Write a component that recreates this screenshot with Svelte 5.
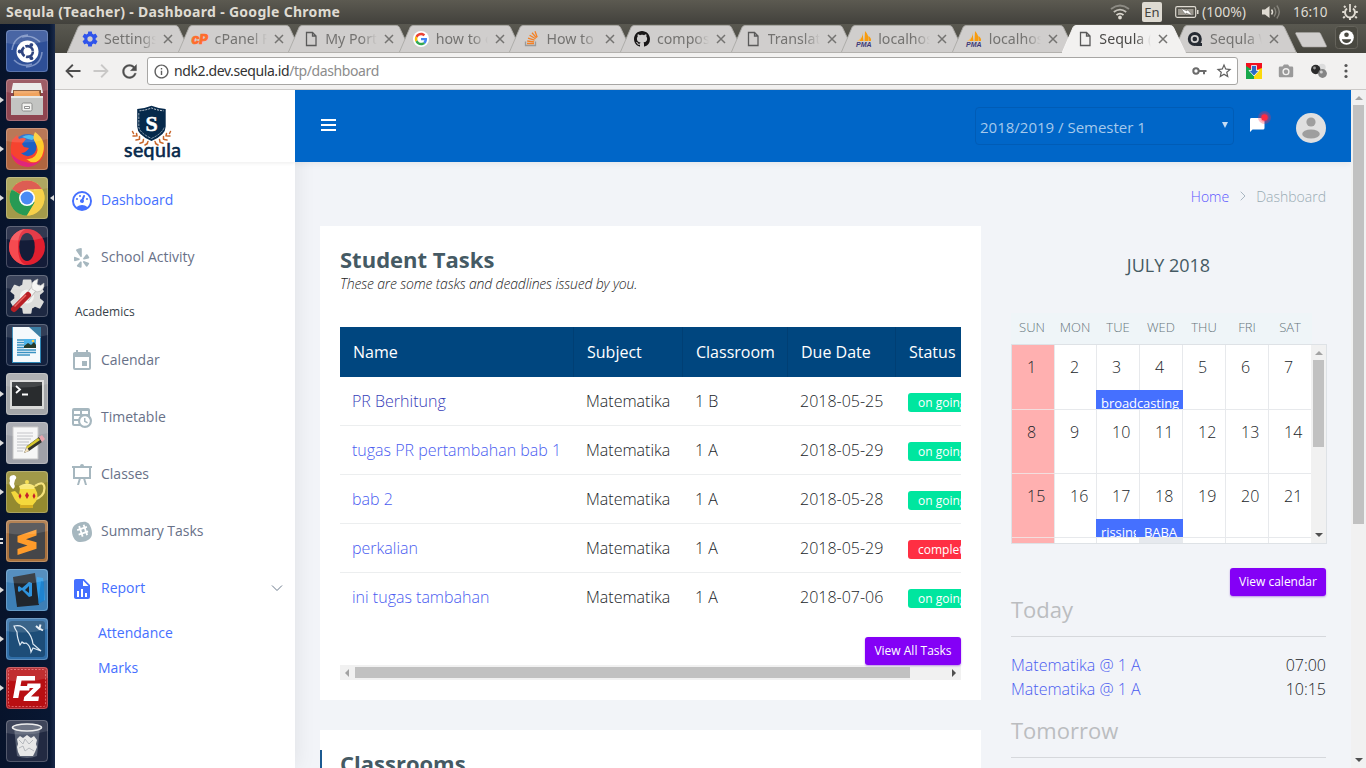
<script>
  const gear = 'M19.43 12.98c.04-.32.07-.64.07-.98s-.03-.66-.07-.98l2.11-1.65c.19-.15.24-.42.12-.64l-2-3.46c-.12-.22-.39-.3-.61-.22l-2.49 1c-.52-.4-1.08-.73-1.69-.98l-.38-2.65C14.46 2.18 14.25 2 14 2h-4c-.25 0-.46.18-.49.42l-.38 2.65c-.61.25-1.17.59-1.69.98l-2.49-1c-.23-.09-.49 0-.61.22l-2 3.46c-.13.22-.07.49.12.64l2.11 1.65c-.04.32-.07.65-.07.98s.03.66.07.98l-2.11 1.65c-.19.15-.24.42-.12.64l2 3.46c.12.22.39.3.61.22l2.49-1c.52.4 1.08.73 1.69.98l.38 2.65c.03.24.24.42.49.42h4c.25 0 .46-.18.49-.42l.38-2.65c.61-.25 1.17-.59 1.69-.98l2.49 1c.23.09.49 0 .61-.22l2-3.46c.12-.22.07-.49-.12-.64l-2.11-1.65zM12 15.5c-1.93 0-3.5-1.57-3.5-3.5s1.57-3.5 3.5-3.5 3.5 1.57 3.5 3.5-1.57 3.5-3.5 3.5z';

  const fav = {
    gear: `<path transform="translate(-1.1 -1.1) scale(.76)" fill="#2f54eb" d="${gear}"/>`,
    cpanel: `<text x="-.5" y="12.5" font-family="Inter" font-weight="800" font-style="italic" font-size="13.5" textLength="16.5" lengthAdjust="spacingAndGlyphs" fill="#ff6c2c" stroke="#ff6c2c" stroke-width=".7">cP</text>`,
    page: `<path d="M3.500 1.500h6l3.500 3.500v9.500h-9.500zM9.500 1.500v3.500h3.500" fill="none" stroke="#5a5a5a" stroke-width="1.300"/>`,
    google: `<circle cx="8" cy="8" r="8" fill="#fff"/><g transform="translate(1.800 1.800) scale(.26)"><path fill="#EA4335" d="M24 9.500c3.540 0 6.710 1.220 9.210 3.600l6.850-6.850C35.900 2.380 30.470 0 24 0 14.620 0 6.510 5.380 2.560 13.220l7.980 6.190C12.430 13.720 17.740 9.500 24 9.500z"/><path fill="#4285F4" d="M46.980 24.550c0-1.570-.15-3.090-.38-4.550H24v9.020h12.940c-.58 2.960-2.260 5.480-4.780 7.180l7.730 6c4.510-4.180 7.090-10.360 7.090-17.650z"/><path fill="#FBBC05" d="M10.530 28.590c-.48-1.450-.76-2.990-.76-4.590s.27-3.140.76-4.590l-7.980-6.190C.92 16.460 0 20.120 0 24s.92 7.540 2.560 10.780l7.970-6.190z"/><path fill="#34A853" d="M24 48c6.480 0 11.930-2.130 15.890-5.810l-7.730-6c-2.150 1.450-4.920 2.300-8.160 2.300-6.260 0-11.570-4.220-13.470-9.910l-7.980 6.190C6.510 42.620 14.620 48 24 48z"/></g>`,
    stack: `<path d="M1.500 10.500v4h10v-4" fill="none" stroke="#9a9a9a" stroke-width="1.300"/><path d="M3 12.500h7M3.200 10l6.900.8M4 7.200l6.600 2M5.600 4.200l6 3.600M8 1.700l4.500 5.200M11 .3l2.200 6" stroke="#f48024" stroke-width="1.300" fill="none"/>`,
    github: `<path fill="#191717" d="M8 0C3.580 0 0 3.580 0 8c0 3.540 2.290 6.530 5.470 7.590.4.070.55-.17.55-.38 0-.19-.01-.82-.01-1.490-2.010.37-2.530-.49-2.690-.94-.09-.23-.48-.94-.82-1.130-.28-.15-.68-.52-.01-.53.63-.01 1.080.58 1.230.82.72 1.210 1.870.87 2.330.66.070-.52.28-.87.51-1.070-1.780-.2-3.640-.89-3.640-3.950 0-.87.31-1.590.82-2.150-.08-.2-.36-1.020.080-2.120 0 0 .67-.21 2.200.82.64-.18 1.320-.27 2-.27.68 0 1.360.090 2 .27 1.530-1.040 2.200-.82 2.200-.82.44 1.100.16 1.920.080 2.120.51.56.82 1.270.82 2.150 0 3.070-1.870 3.750-3.650 3.950.29.25.54.73.54 1.480 0 1.070-.01 1.930-.01 2.200 0 .21.15.46.55.38A8.013 8.013 0 0 0 16 8c0-4.420-3.580-8-8-8z"/>`,
    pma: `<path d="M6.500 1.500Q7 6 3 10h4.500zM9 0Q13 4 12.500 10H8.500zM12.500 5q3 2 2.500 5h-2z" fill="#f89c0e"/><path d="M5 5q-1 4-4 5h3z" fill="#fbbf63"/><text x="0" y="15.700" font-family="Liberation Sans" font-weight="700" font-style="italic" font-size="6.800" textLength="15.500" lengthAdjust="spacingAndGlyphs" fill="#3f3a78">PMA</text>`,
    eye: `<circle cx="7.800" cy="8" r="7" fill="#262b33"/><circle cx="7.800" cy="8" r="3.200" fill="none" stroke="#d0cfce" stroke-width="1.800"/><path d="M10 12h5v3H9z" fill="#262b33"/><circle cx="7.800" cy="8" r="1.300" fill="#262b33"/>`,
  };

  const tabs = [
    { t: 'Settings', i: fav.gear }, { t: 'cPanel Fi', i: fav.cpanel }, { t: 'My Portal', i: fav.page },
    { t: 'how to cr', i: fav.google }, { t: 'How to o', i: fav.stack }, { t: 'compose', i: fav.github },
    { t: 'Translati', i: fav.page }, { t: 'localhost', i: fav.pma }, { t: 'localhost', i: fav.pma },
    { t: 'Sequla (T', i: fav.page, on: true }, { t: 'Sequla W', i: fav.eye },
  ];

  const dock = [
    { c: '#2e4f97', s: '<g fill="none" stroke="#b9c8ea" stroke-width="1.600" opacity=".55"><path d="M6 20Q8 6 22 5M36 22Q35 36 20 37M8 30Q16 38 26 34M34 12Q26 4 16 7"/></g><circle cx="21.500" cy="21.500" r="11" fill="#fff"/><circle cx="21.500" cy="21.500" r="5.400" fill="none" stroke="#2e4480" stroke-width="2.600" stroke-dasharray="9.800 1.500"/><g fill="#2e4480"><circle cx="13.700" cy="21.500" r="1.900"/><circle cx="25.400" cy="14.800" r="1.900"/><circle cx="25.400" cy="28.200" r="1.900"/></g>' },
    { c: '#8f4550', n: 1, s: '<path d="M7 4h28l2 10H5z" fill="#e9e9e7"/><path d="M7 11h28v6H7z" fill="#7a4a2a"/><path d="M8 12h25l1 5H8z" fill="#f0a35e"/><path d="M5 17h32v19H5z" fill="#c3c4c2"/><path d="M5 17h32v2H5z" fill="#e8e8e6"/><rect x="16" y="24" width="10" height="8" rx="1.500" fill="#f2f2f0" stroke="#8c8c8a"/><path d="M18.500 27.500h5v2h-5z" fill="#fff" stroke="#777" stroke-width=".8"/>' },
    { c: '#b0653f', n: 1, s: '<circle cx="21.500" cy="20" r="14" fill="#1e5fc4"/><path d="M16 9q7-4 14 0l-4 3-4-1z" fill="#35b5ee"/><path d="M6 12l5-5 2 4q4-2 7 0l-4 5 2 3 5 1q-3 5-8 5 5 5 11 2 6-4 4-11l-1-4q4-1 8 3 4 10-2 17-7 7-15 6.500Q8 38 5 26q-1-7 1-14z" fill="#f6432f"/><path d="M29 4q-3 6 0 10 5 8 0 14-4 4-9 3 10 8 16-3Q42 13 29 4z" fill="#ffcb2b"/><path d="M5 25q3 13 17 14 8-1 12-6-7 4-14 1Q10 32 5 25z" fill="#e0267a"/>' },
    { c: '#a39a4a', n: 1, f: 1, s: '<circle cx="21" cy="21" r="17.500" fill="#f2c83c"/><path d="M21 21 5.800 12.300A17.500 17.500 0 0 1 36.200 12.300H21z" fill="#d8463a"/><path d="M5.800 12.300A17.500 17.500 0 0 0 21 38.500l8-13-8-4z" fill="#279a54"/><path d="M5.800 12.300 13.400 25.400 21 29 13 18z" fill="#279a54"/><path d="M36.200 12.300A17.500 17.500 0 0 1 21 38.500l7.600-13-.8-13.200z" fill="#f7d149"/><circle cx="21" cy="21" r="8" fill="#fff"/><circle cx="21" cy="21" r="6.400" fill="#4a8af4"/>' },
    { c: '#141c38', s: '<ellipse cx="21" cy="21" rx="18" ry="18" fill="#e01f2f"/><path d="M21 3a18 18 0 0 0 0 36q-9-1-9-18t9-18z" fill="#f64a50"/><ellipse cx="21" cy="21" rx="7.800" ry="14" fill="#141c38"/>' },
    { c: '#1d2842', s: `<path transform="translate(.5 1) scale(1.720)" fill="#dcdcda" d="${gear}"/><circle cx="21" cy="21.500" r="7" fill="#f3f3f1"/><path d="M20 24L30 11" stroke="#b9b9b7" stroke-width="6.500"/><path d="M20 24L30 11" stroke="#f4f4f2" stroke-width="5"/><path d="M26 14q-2-8 6-10l-1 5 3 2 4-3q1 8-7 9z" fill="#f4f4f2" stroke="#b0b0ae" stroke-width=".6"/><path d="M8 34L22 20" stroke="#b81f25" stroke-width="6" stroke-linecap="round"/><path d="M8.500 31.500L20 20" stroke="#ec6a64" stroke-width="1.500"/>` },
    { c: '#14223f', s: '<path d="M6 3h20l9 9v27H6z" fill="#f4f9fc"/><path d="M23 3h12v11z" fill="#1f6c98"/><path d="M6 3h1v36H6zM35 14v25H6v-1h28V14z" fill="#2d86b5"/><path d="M11 16h7M11 18.500h7M11 21h7M11 23.500h7M11 26h19M11 28.500h19M11 31h13" stroke="#3a92c2" stroke-width="1.400"/><path d="M18 15h12v9H18z" fill="#4eb4ea"/><path d="M18 22l4-3 3 2 3-3 2 3v3H18z" fill="#263b2a"/><circle cx="27" cy="17" r="1.300" fill="#f9d048"/>' },
    { c: '#a4a6a8', n: 1, s: '<path d="M4 7h34v29H4z" fill="#d9dad8"/><path d="M6 9h30v24H6z" fill="#292c2e"/><path d="M10 13l4 3.500-4 3.500M16 21.500h6" fill="none" stroke="#fff" stroke-width="1.800"/>' },
    { c: '#9fa1a8', n: 1, s: '<path d="M7 5h25v32H7z" fill="#f6f6f6" stroke="#c4c4c4"/><path d="M11 11h16M11 14h16M11 17h14M11 20h12M11 23h12M11 26h9M11 29h6" stroke="#b5b8bc" stroke-width=".9"/><path d="M18 31l3-7 12-9 3 5-13 9z" fill="#33342c"/><path d="M20 25L32 16l2 2-13 9z" fill="#d8c92f"/><path d="M33 15l3-2 3 4-3 3z" fill="#e9a3ac"/><path d="M18 31l3-6 2 4z" fill="#f2dfbb"/>' },
    { c: '#948a2f', n: 1, s: '<path d="M29 15q9-6 9.500 2 0 9-11 12" fill="none" stroke="#f5e27a" stroke-width="2.200"/><path d="M14 17h15q6 10-2 17H15q-5-2-8-9l-2-4 4-1 4 4z" fill="#f4d93c"/><path d="M13 15q8-5 16 0l-1 3H14z" fill="#f9e878"/><circle cx="21" cy="11" r="2" fill="#f4d93c"/><path d="M14 34h13v3H14z" fill="#d5ae21"/><path d="M14 22l1.500 3-1.500 3-1.500-3zM21 21l2 3.500-2 3.500-2-3.500zM28 22l1.500 3-1.500 3-1.500-3z" fill="#c5202c"/><path d="M7 18Q2 13 4 10q-2-6 4-6 4 2 1 5l-1 4q2 3-1 5z" fill="#fff"/>' },
    { c: '#a8703c', n: 2, s: '<rect x="3" y="3" width="36" height="36" rx="2" fill="#454649"/><path d="M11.500 16L30.500 9.500v6L20 19.300l10.500 3v6.500L11.500 35v-6l10-3.500-10-3.200z" fill="#ff9b2a"/>' },
    { c: '#3d7fb6', n: 1, s: '<path d="M31 8l6 1 2 22-8 4z" fill="#2d9ae6"/><path d="M7 8l22-4 4 32-22 2z" fill="#20262d"/><path d="M35 12l3 1v19l-6 3z" fill="#1675c0" opacity=".6"/><path d="M23 13l3 1v13l-3 1-7-7-3 2-1-1v-4l1-1 3 2zM23 17l-4 4 4 3z" fill="#2f93dc" fill-rule="evenodd"/>' },
    { c: '#2f6ea8', n: 1, s: '<rect x="3" y="3" width="36" height="36" rx="3" fill="#1d4d78"/><path d="M8 8q8-2 13 5 5 5 6 13l8 7-8-3q-1 2-2 4-1-7-5-9-2 1-4-1l-2 3q-3-8-3-13-2-3-3-6z" fill="none" stroke="#dfeaf4" stroke-width="1.200"/><path d="M30 8l4 3.500M34.500 6.500l-1 4 3.500 2" stroke="#e6eef5" stroke-width="2" fill="none"/>' },
    { c: '#ad1a20', n: 1, s: '<rect x="2.500" y="2.500" width="37" height="37" rx="2" fill="#b80f12" stroke="#df6063" stroke-dasharray="2 1.500"/><path d="M11 9h18v4.500H15.500L14.500 19H24l-.8 4.500h-9.500L12.300 31H7z" fill="#fff"/><path d="M21.500 16.500H34.500v3.800L25 29.500h8L32.300 34H17.500l.7-4 9.300-9h-6.800z" fill="#fff"/>' },
    { c: '#222a42', gap: 1, s: '<path d="M8 7l3 29q10 4 20 0l3-29z" fill="#737b8a" opacity=".65"/><path d="M11 19l3-3 3 2 4-3 4 3 3-2 3 4-1 4 1 3-2 5-2 4H14l-2-4-1-5 1-3z" fill="#e8e8e8"/><path d="M13 20l4 4 2-5 4 5 4-4M13 28l4-2 2 5 4-3 5 3" fill="none" stroke="#b5b8bd"/><ellipse cx="21" cy="7.500" rx="14.500" ry="3.500" fill="#596072" stroke="#ececec" stroke-width="1.600"/>' },
  ];

  const nav = {
    gauge: 'M12,2A10,10 0 0,0 2,12A10,10 0 0,0 12,22A10,10 0 0,0 22,12A10,10 0 0,0 12,2M12,4A8,8 0 0,1 20,12C20,14.4 19,16.5 17.3,18C15.9,16.7 14,16 12,16C10,16 8.2,16.7 6.7,18C5,16.5 4,14.4 4,12A8,8 0 0,1 12,4M14,5.89C13.62,5.9 13.26,6.15 13.1,6.54L11.81,9.77L11.71,10C11,10.13 10.41,10.6 10.14,11.26C9.73,12.29 10.23,13.45 11.26,13.86C12.29,14.27 13.45,13.77 13.86,12.74C14.12,12.08 14,11.32 13.57,10.76L13.67,10.5L14.96,7.29L14.97,7.26C15.17,6.75 14.92,6.17 14.41,5.96C14.28,5.91 14.15,5.89 14,5.89M10,6A1,1 0 0,0 9,7A1,1 0 0,0 10,8A1,1 0 0,0 11,7A1,1 0 0,0 10,6M7,9A1,1 0 0,0 6,10A1,1 0 0,0 7,11A1,1 0 0,0 8,10A1,1 0 0,0 7,9M17,9A1,1 0 0,0 16,10A1,1 0 0,0 17,11A1,1 0 0,0 18,10A1,1 0 0,0 17,9Z',
    yelp: 'M6.3,3.600Q8.500,2 11,2Q11.800,2 11.800,3L11.800,10.200Q11.500,11.600 10.400,10.700L6.200,4.700Q5.900,4 6.300,3.600ZM4.600,10.800L9.300,12.600Q10.200,13.300 9.300,14L4.900,15.200Q4,15.200 4,14.300V11.500Q4.100,10.700 4.600,10.800ZM7,19.200L10.300,15.600Q11.500,15 11.700,16.200L11.600,21Q11.400,22 10.400,21.800L7.500,20.700Q6.600,20.200 7,19.200ZM13.900,15.100L18.500,16.700Q19.500,17.100 19,18L17.300,20.400Q16.500,21.100 15.900,20.300L13,16.300Q12.800,15.100 13.900,15.100ZM13.200,12.200L16.100,8.500Q16.800,7.900 17.500,8.600L19.200,11.200Q19.500,12 18.600,12.400L14,13.500Q12.800,13.500 13.200,12.200Z',
    calendar: 'M19,19H5V8H19M16,1V3H8V1H6V3H5C3.890,3 3,3.890 3,5V19A2,2 0 0,0 5,21H19A2,2 0 0,0 21,19V5C21,3.890 20.100,3 19,3H18V1M17,12H12V17H17V12Z',
    timetable: 'M14,12H15.5V14.82L17.94,16.23L17.19,17.53L14,15.69V12M4,2H18A2,2 0 0,1 20,4V10.1C21.24,11.36 22,13.09 22,15A7,7 0 0,1 15,22C13.09,22 11.36,21.24 10.1,20H4A2,2 0 0,1 2,18V4A2,2 0 0,1 4,2M4,15V18H8.67C8.24,17.09 8,16.07 8,15H4M4,8H10V5H4V8M18,8V5H12V8H18M4,13H8.29C8.63,11.85 9.26,10.82 10.1,10H4V13M15,10.15A4.85,4.85 0 0,0 10.15,15C10.15,17.68 12.32,19.85 15,19.85A4.85,4.85 0 0,0 19.85,15C19.85,12.32 17.68,10.15 15,10.15Z',
    classes: 'M2,3H10A2,2 0 0,1 12,1A2,2 0 0,1 14,3H22V5H21V16H15.25L17,22H15L13.25,16H10.75L9,22H7L8.75,16H3V5H2V3M5,5V14H19V5H5Z',
    slack: 'M10.300,2.300C16.500,.7 19.300,2.500 21.200,8.300C23.200,15.500 21.600,19 15.500,21.300C8.500,23.300 5,21.700 2.700,15.700C.8,9 2.700,4.800 10.300,2.300ZM8.300,6.400L9,8.500L6.900,9.200L7.500,10.900L9.600,10.200L10.500,13L8.400,13.700L8.900,15.400L11.100,14.700L11.800,16.900L13.500,16.300L12.800,14.200L15.600,13.300L16.300,15.400L18,14.800L17.300,12.700L18.400,12.300L17.800,10.600L16.700,11L15.800,8.200L17.200,7.700L16.600,6L15.200,6.500L14.500,4.400L12.800,5L13.500,7.100L10.700,8L10,5.800ZM11.300,9.700L14.100,8.800L15,11.600L12.200,12.500Z',
    report: 'M13,9H18.5L13,3.5V9M6,2H14L20,8V20A2,2 0 0,1 18,22H6C4.89,22 4,21.1 4,20V4C4,2.89 4.89,2 6,2M7,20H9V14H7V20M11,20H13V12H11V20M15,20H17V16H15V20Z',
  };

  const rows = [
    ['PR Berhitung', '1 B', '2018-05-25', 'on going', true],
    ['tugas PR pertambahan bab 1', '1 A', '2018-05-29', 'on going'],
    ['bab 2', '1 A', '2018-05-28', 'on going'],
    ['perkalian', '1 A', '2018-05-29', 'completed'],
    ['ini tugas tambahan', '1 A', '2018-07-06', 'on going'],
  ];
  const days = ['SUN', 'MON', 'TUE', 'WED', 'THU', 'FRI', 'SAT'];
  const weeks = [
    { d: [1, 2, 3, 4, 5, 6, 7], e: [['broadcasting', 3, 2]] },
    { d: [8, 9, 10, 11, 12, 13, 14], e: [] },
    { d: [15, 16, 17, 18, 19, 20, 21], e: [['rissing', 3, 1], ['BABA', 4, 1]] },
    { d: ['', '', '', '', '', '', ''], e: [], last: true },
  ];
</script>

{#snippet item(icon, label, on)}
  <a class="item" class:on href="#top">
    <svg viewBox="0 0 24 24" width="24" height="24"><path d={icon} fill="currentColor" fill-rule="evenodd" /></svg>
    <span>{label}</span>
    {#if label === 'Report'}
      <svg class="chev" viewBox="0 0 12 8" width="12" height="8"><path d="M1 1.500l5 5 5-5" fill="none" stroke="#6b7a8c" stroke-width="1" /></svg>
    {/if}
  </a>
{/snippet}

<div class="desktop">
  <header class="panel">
    <span class="wintitle">Sequla (Teacher) - Dashboard - Google Chrome</span>
    <div class="tray">
      <svg class="wifi" width="20" height="16" viewBox="0 0 20 16" fill="none" stroke-width="1.800"><path d="M1 5q9-7 18 0" stroke="#8d8b84" /><path d="M3.800 8q6.200-4.800 12.400 0" stroke="#c5c2ba" /><path d="M6.500 11q3.500-2.700 7 0" stroke="#dfdbd2" /><circle cx="10" cy="13.500" r="1" fill="#dfdbd2" stroke="#dfdbd2" /></svg>
      <span class="lang">En</span>
      <svg class="bat" width="24" height="12" viewBox="0 0 24 12"><rect x=".7" y=".7" width="20" height="10.600" rx="1.500" fill="none" stroke="#dfdbd2" stroke-width="1.200" /><path d="M3 3h15.500v6H3z" fill="#9b978e" /><path d="M22 4h1.500v4H22z" fill="#dfdbd2" /><path d="M6 2.500l6 2.500.5-1.500 5 6-6.500-2.500-.5 1.500z" fill="#fff" stroke="#4b4943" stroke-width=".4" /></svg>
      <span class="pct">(100%)</span>
      <svg class="vol" width="20" height="16" viewBox="0 0 20 16" fill="none"><path d="M1 5.500h3L8.500 2v12L4 10.500H1z" fill="#dfdbd2" /><path d="M10.500 5.500q2 2.500 0 5" stroke="#dfdbd2" stroke-width="1.500" /><path d="M13 3.500q3.500 4.500 0 9M15.800 1.500q5 6.500 0 13" stroke="#85837b" stroke-width="1.400" /></svg>
      <span class="clock">16:10</span>
      <svg width="18" height="18" viewBox="0 0 18 18" fill="none" stroke="#dfdbd2"><path d="M6 5.500a5 5 0 1 0 6 0" stroke-width="2" /><path d="M9 1v8" stroke-width="1.800" /><path d="M9 15v2M3.800 13.500l-1.600 1.600M14.200 13.500l1.600 1.600M3.500 9H1.200M14.500 9h2.300M4.500 4.500L3 3M13.500 4.500L15 3" stroke-width="2" /></svg>
    </div>
  </header>

  <div class="below">
    <aside class="dock">
      {#each dock as d}
        <div class="slot" class:gap={d.gap}>
          <span class="mark">{#if d.n === 1}<i class="tri"></i>{:else if d.n === 2}<i class="bar"></i><i class="bar"></i>{/if}</span>
          <svg class="tile" viewBox="0 0 42 42" width="42" height="42">
            <rect width="42" height="42" rx="3.500" fill={d.c} />
            <rect x=".5" y=".5" width="41" height="41" rx="3.500" fill="none" stroke="#fff" stroke-opacity=".22" />
            {@html d.s}
            <path d="M0 4q0-4 4-4h34q4 0 4 4v7Q21 17 0 13z" fill="#fff" opacity=".13" />
          </svg>
          <span class="mark end">{#if d.f}<i class="tri focus"></i>{/if}</span>
        </div>
      {/each}
    </aside>

    <div class="browser">
      <div class="tabstrip">
        {#each tabs as t}
          <div class="tab" class:active={t.on}>
            <svg class="shape" viewBox="0 0 124 28" width="124" height="28">
              <path d="M0 28L11 2.500Q12 .5 14 .5H108.500Q110.500 .5 111.500 2.500L123.500 28z" fill={t.on ? '#f2f1f0' : '#d0cecd'} />
              <path d="M0 28L11 2.500Q12 .5 14 .5H108.500Q110.500 .5 111.500 2.500L123.500 28" fill="none" stroke={t.on ? '#f8f7f6' : '#aaa9a6'} stroke-width=".9" />
              {#if !t.on}<path d="M0 27.500H124" stroke="#b3b1ae" />{/if}
            </svg>
            <svg class="fav" viewBox="0 0 16 16" width="16" height="16">{@html t.i}</svg>
            <span class="tt">{t.t}</span>
            <svg class="x" viewBox="0 0 10 10" width="10" height="10"><path d="M1 1l8 8M9 1l-8 8" stroke="#747371" stroke-width="1.500" /></svg>
          </div>
        {/each}
        <svg class="newtab" width="34" height="18" viewBox="0 0 34 18"><path d="M2 1.500h22.500q1.500 0 2 1L32.500 15q.3 1-.8 1H10q-1.500 0-2-1L1.500 2.500z" fill="#d0cecd" stroke="#a5a39f" stroke-width=".6" /></svg>
        <svg class="user" width="24" height="24" viewBox="0 0 24 24"><rect x=".5" y=".5" width="22" height="22" rx="3" fill="#494840" stroke="#65635b" /><circle cx="11.500" cy="11.500" r="7.300" fill="#fff" /><circle cx="11.500" cy="8.700" r="2.300" fill="#494840" /><path d="M6.800 13.300h9.400q-1.200 3.800-4.700 3.800t-4.700-3.800z" fill="#494840" /></svg>
      </div>

      <div class="toolbar">
        <svg width="20" height="20" viewBox="0 0 24 24" fill="#4d4d4d"><path d="M21 10.900H7l5.600-5.600L11 3.700 2.700 12l8.300 8.300 1.600-1.600L7 13.100h14z" /></svg>
        <svg width="20" height="20" viewBox="0 0 24 24" fill="#c9c8c7"><path d="M3 10.900h14l-5.600-5.600L13 3.700l8.300 8.300-8.300 8.300-1.600-1.600 5.600-5.600H3z" /></svg>
        <svg width="21" height="21" viewBox="0 0 24 24" fill="#4d4d4d"><path stroke="#4d4d4d" stroke-width=".4" d="M17.650 6.350C16.200 4.900 14.210 4 12 4c-4.420 0-7.990 3.580-7.990 8s3.570 8 7.990 8c3.730 0 6.840-2.550 7.730-6h-2.080c-.82 2.330-3.040 4-5.650 4-3.310 0-6-2.690-6-6s2.690-6 6-6c1.660 0 3.140.69 4.220 1.780L13 11h7V4l-2.350 2.350z" /></svg>
        <div class="omni">
          <svg width="17" height="17" viewBox="0 0 24 24" fill="#5f5f5f"><path d="M11 17h2v-6h-2v6zm1-15C6.480 2 2 6.480 2 12s4.480 10 10 10 10-4.480 10-10S17.520 2 12 2zm0 18c-4.410 0-8-3.590-8-8s3.590-8 8-8 8 3.590 8 8-3.590 8-8 8zM11 9h2V7h-2v2z" /></svg>
          <span class="url">ndk2.dev.sequla.id<em>/tp/dashboard</em></span>
          <svg width="15" height="8" viewBox="0 0 15 8"><circle cx="4" cy="4" r="2.700" fill="none" stroke="#6b6b6b" stroke-width="2" /><path d="M6.500 3H14.500v2H13v2.200h-2V5H6.500z" fill="#6b6b6b" /></svg>
          <svg width="18" height="18" viewBox="0 0 24 24" fill="#5f5f5f"><path d="M22 9.240l-7.190-.62L12 2 9.190 8.630 2 9.240l5.460 4.730L5.820 21 12 17.270 18.180 21l-1.630-7.030L22 9.240zM12 15.400l-3.760 2.270 1-4.280-3.320-2.880 4.380-.38L12 6.100l1.710 4.040 4.380.38-3.320 2.880 1 4.280L12 15.400z" /></svg>
        </div>
        <div class="ext">
          <svg width="16" height="16" viewBox="0 0 16 16"><path d="M0 0h8v16H0z" fill="#17a84b" /><path d="M8 0h8v16H8z" fill="#fbd90c" /><path d="M0 0h16v5L8 8 0 3z" fill="#f20f1f" /><path d="M5.500 2.500h5v5H13L8 13 3 7.500h2.500z" fill="#2a69c7" stroke="#fff" stroke-width=".8" /></svg>
          <svg width="16" height="14" viewBox="0 0 16 14"><path d="M2 2.500h2.500L6 .5h4l1.500 2H14q1.200 0 1.200 1.200V12q0 1.200-1.200 1.200H2Q.8 13.200.8 12V3.700Q.8 2.500 2 2.500z" fill="#9a9a9a" /><circle cx="8" cy="7.700" r="3.600" fill="#f2f1f0" /><circle cx="8" cy="7.700" r="2.200" fill="#9a9a9a" /></svg>
          <svg width="18" height="16" viewBox="0 0 18 16"><circle cx="12" cy="4.500" r="3.700" fill="#dcdcdc" /><circle cx="5.700" cy="6.500" r="4.700" fill="#2b2b2b" /><circle cx="4.500" cy="5" r="1.400" fill="#999" /><circle cx="12.500" cy="10.500" r="4.400" fill="#858585" /><circle cx="11.300" cy="9" r="1.500" fill="#d0d0d0" /></svg>
          <svg width="4" height="16" viewBox="0 0 4 16" fill="#555"><circle cx="2" cy="2.500" r="1.600" /><circle cx="2" cy="8" r="1.600" /><circle cx="2" cy="13.500" r="1.600" /></svg>
        </div>
      </div>

      <div class="page">
        <nav class="side">
          <div class="brand">
            <svg width="60" height="58" viewBox="0 0 60 58">
              <path d="M13.200 4Q21 3.500 27.500 .8 34 3.500 41.700 4V21.500q0 8.500-14.200 14.500-14.300-6-14.300-14.500z" fill="#06294b" />
              <path d="M15.500 5.800q6-.5 12-2.800 6 2.300 12 2.800" fill="none" stroke="#fff" stroke-width=".8" stroke-dasharray="2 1" />
              <path d="M14.800 8v14q1 6 12.700 11.500Q39 28 40.200 22" fill="none" stroke="#cfd8e0" stroke-width=".7" stroke-dasharray="2.500 1" />
              <text x="27.600" y="25.500" text-anchor="middle" font-family="Liberation Serif" font-weight="700" font-size="22" fill="#fff" stroke="#fff" stroke-width=".5">S</text>
              <g stroke="#c8662b" fill="none" stroke-width="1.500" stroke-linecap="round">
                <path d="M8.500 26.500l1 2M9 31h2.500M12.500 28.500l.5 2.500M12 35l2.800-.5M15.500 31.500v2.800M16 38.300l2.800-1M19.500 34.500l-.5 2.500M21 40l2.500-1.500M24 36.500l-.8 1.800" />
                <path d="M46.500 26.500l-1 2M46 31h-2.500M42.500 28.500l-.5 2.500M43 35l-2.800-.5M39.500 31.500v2.800M39 38.300l-2.800-1M35.500 34.500l.5 2.500M34 40l-2.500-1.500M31 36.500l.8 1.800" />
              </g>
              <text x="0" y="52" font-family="Lato" font-weight="400" font-size="19.500" textLength="57" lengthAdjust="spacing" fill="#06294b" stroke="#06294b" stroke-width=".6">sequla</text>
            </svg>
          </div>
          <div class="menu">
            {@render item(nav.gauge, 'Dashboard', true)}
            {@render item(nav.yelp, 'School Activity', false)}
            <div class="sect">Academics</div>
            {@render item(nav.calendar, 'Calendar', false)}
            {@render item(nav.timetable, 'Timetable', false)}
            {@render item(nav.classes, 'Classes', false)}
            {@render item(nav.slack, 'Summary Tasks', false)}
            {@render item(nav.report, 'Report', true)}
            <a class="sub" href="#top">Attendance</a>
            <a class="sub" href="#top">Marks</a>
          </div>
        </nav>

        <div class="content">
          <div class="top">
            <div class="burger"><i></i><i></i><i></i></div>
            <div class="sel"><span>2018/2019 / Semester 1</span><i></i></div>
            <svg class="chat" width="26" height="26" viewBox="0 0 26 26"><path d="M4.500 7h12.500q1.500 0 1.500 1.500v8.500q0 1.500-1.500 1.500H6.500L4 21V8.500Q4 7 5 7z" fill="#fff" /><circle cx="18.500" cy="6.500" r="6.500" fill="#fa2f4b" fill-opacity=".3" /><circle cx="18.500" cy="6.500" r="4.500" fill="#fa2f4b" fill-opacity=".25" /><circle cx="18.500" cy="6.500" r="3.200" fill="#ff2b40" /></svg>
            <svg width="30" height="30" viewBox="0 0 30 30"><circle cx="15" cy="15" r="15" fill="#e0e0e0" /><circle cx="15" cy="9" r="4.600" fill="#9e9e9e" /><ellipse cx="15" cy="21" rx="8.800" ry="4.600" fill="#9e9e9e" /></svg>
          </div>
          <div class="crumbs"><a href="#top">Home</a><svg width="6" height="10" viewBox="0 0 6 10"><path d="M.7.7L5 5 .7 9.300" fill="none" stroke="#a9b7c2" /></svg><span>Dashboard</span></div>
          <div class="cols">
            <div class="main">
              <section class="card tasks">
                <h2>Student Tasks</h2>
                <p>These are some tasks and deadlines issued by you.</p>
                <div class="scroller">
                  <div class="tr th"><span>Name</span><span>Subject</span><span>Classroom</span><span>Due Date</span><span>Status</span></div>
                  {#each rows as r}
                    <div class="tr"><span><a class:hov={r[4]} href="#top">{r[0]}</a></span><span>Matematika</span><span>{r[1]}</span><span>{r[2]}</span><span><b class:red={r[3] === 'completed'}>{r[3]}</b></span></div>
                  {/each}
                </div>
                <div class="act"><button>View All Tasks</button></div>
                <div class="hbar"><i class="al"></i><i class="hthumb"></i><i class="ar"></i></div>
              </section>
              <section class="card second"><h2>Classrooms</h2></section>
            </div>
            <div class="right">
              <div class="month">JULY 2018</div>
              <div class="dow">{#each days as d}<span>{d}</span>{/each}</div>
              <div class="cal">
                <div class="weeks">
                  {#each weeks as w}
                    <div class="week">
                      {#each w.d as n, i}<span class="day" class:sun={i === 0} class:today={w.last && i === 3}>{n}</span>{/each}
                      {#if w.e.length}
                        <div class="events">
                          {#each w.e as e}<span class="ev" style="grid-column: {e[1]} / span {e[2]}"><span>{e[0]}</span></span>{/each}
                        </div>
                      {/if}
                    </div>
                  {/each}
                </div>
                <div class="vbar"><i class="up"></i><i class="thumb"></i><i class="down"></i></div>
              </div>
              <div class="act"><button>View calendar</button></div>
              <h3>Today</h3>
              <div class="line"><a href="#top">Matematika @ 1 A</a><span>07:00</span></div>
              <div class="line"><a href="#top">Matematika @ 1 A</a><span>10:15</span></div>
              <h3 class="tm">Tomorrow</h3>
            </div>
          </div>
        </div>
        <div class="vbar pagebar"><i class="up"></i><i class="thumb"></i><i class="down"></i></div>
      </div>
    </div>
  </div>
</div>

<style>
  :global(body) { background: #f2f4f8; overflow: hidden; }
  * { box-sizing: border-box; }
  .desktop { width: 1366px; height: 768px; display: flex; flex-direction: column; overflow: hidden; font-family: "Open Sans", sans-serif; }
  a { text-decoration: none; color: #4a5cf0; }
  .panel { height: 24px; flex: none; background: linear-gradient(#5c5a51, #42413c); display: flex; align-items: center; padding: 0 7px 0 6px; color: #dfdbd2; }
  .wintitle { font: 700 14px/24px "Noto Sans", sans-serif; letter-spacing: .3px; white-space: nowrap; }
  .tray { margin-left: auto; display: flex; align-items: center; font: 400 14px/24px "Noto Sans", sans-serif; }
  .lang { width: 20px; height: 20px; background: #dfdbd2; color: #44423d; border-radius: 2px; font: 400 13px/20px "Noto Sans", sans-serif; text-align: center; margin: 0 13px 0 12px; }
  .pct { width: 48px; font-size: 14px; margin-left: 3px; }
  .vol { margin: 0 12px 0 11px; }
  .clock { width: 37px; margin-right: 11px; font-size: 13.500px; }
  .below { flex: 1; display: flex; min-height: 0; }
  .dock { width: 55px; flex: none; background: linear-gradient(90deg, #07132b, #081732 90%, #1a2a4a); padding-top: 6px; }
  .slot { height: 49px; display: flex; align-items: flex-start; }
  .slot.gap { margin-top: 4px; }
  .tile { flex: none; }
  .mark { width: 6px; height: 42px; display: flex; flex-direction: column; justify-content: center; gap: 2px; flex: none; }
  .tri { border: 3px solid transparent; border-left: 4px solid #dcdcdc; border-right: 0; width: 0; }
  .tri.focus { border-left: 0; border-right: 4px solid #dcdcdc; margin-left: 2px; }
  .bar { width: 3px; height: 2px; background: #dcdcdc; }
  .browser { flex: 1; min-width: 0; display: flex; flex-direction: column; }
  .tabstrip { height: 29px; flex: none; background: linear-gradient(#595850, #46453e); padding: 1px 8px 0 12px; display: flex; }
  .tab { position: relative; width: 123.600px; margin-right: -13px; height: 28px; flex: none; display: flex; align-items: center; padding-left: 14.500px; }
  .tab.active { z-index: 2; }
  .shape { position: absolute; left: 0; top: 0; }
  .fav { position: relative; flex: none; overflow: visible; }
  .tt { position: relative; margin-left: 6.500px; width: 52px; overflow: hidden; white-space: nowrap; font: 400 14.200px/28px "Noto Sans", sans-serif; color: #747371; -webkit-mask-image: linear-gradient(90deg, #000 70%, transparent); mask-image: linear-gradient(90deg, #000 70%, transparent); }
  .active .tt { color: #4b4a48; }
  .x { position: relative; margin-left: 7px; }
  .newtab { margin: 6px 0 0 10px; flex: none; }
  .user { margin: 1px 0 0 7px; flex: none; }
  .toolbar { height: 37px; flex: none; background: #f2f1f0; border-bottom: 1px solid #cbc9c7; display: flex; align-items: center; padding-left: 8px; gap: 8px; }
  .omni { width: 1091px; height: 28px; background: #fff; border: 1px solid #a7a6a4; border-radius: 3px; display: flex; align-items: center; padding: 0 4px 0 5px; gap: 8px; margin-left: -1px; flex: none; }
  .toolbar > svg { flex: none; }
  .url { flex: 1; font: 400 14px/26px "Noto Sans", sans-serif; letter-spacing: -.4px; color: #333; margin-left: -4px; }
  .url em { font-style: normal; color: #8c8c8c; }
  .ext { display: flex; align-items: center; gap: 16px; }
  .page { flex: 1; min-height: 0; display: flex; background: #f2f4f8; overflow: hidden; }
  .side { width: 240px; flex: none; background: #fff; box-shadow: 1px 0 20px rgba(0, 0, 0, .08); z-index: 1; clip-path: polygon(0 0, 240px 0, 240px 72px, 270px 72px, 270px 100%, 0 100%); }
  .brand { height: 72px; box-shadow: 0 1px 4px rgba(0, 0, 0, .08); padding: 15px 0 0 69px; }
  .menu { padding-top: 10px; }
  .item { height: 57px; display: flex; align-items: center; padding: 0 12px 0 15px; color: #687188; font-size: 14px; }
  .item svg { color: #a6b7bf; }
  .item span { margin: -3px 0 0 7px; }
  .item.on, .item.on svg, .sub { color: #4570ff; }
  .chev { margin: -1px 0 0 auto; }
  .sect { height: 46px; padding: 15px 0 0 20px; font-size: 12px; line-height: 22px; color: #37424a; }
  .sub { display: block; height: 35px; padding-left: 43px; font-size: 14px; line-height: 32px; }
  .content { flex: 1; min-width: 0; }
  .top { height: 72px; background: #0066c8; box-shadow: 0 2px 6px rgba(0, 0, 0, .06); display: flex; align-items: center; padding: 3px 25px 0 26px; }
  .burger { width: 15px; display: flex; flex-direction: column; gap: 3px; margin-top: -5px; }
  .burger i { height: 2px; background: #fff; }
  .sel { margin-left: auto; margin-top: -3px; width: 259px; height: 38px; border: 1px solid #005cb6; border-radius: 4px; display: flex; align-items: center; justify-content: space-between; padding: 2px 5px 0 4px; font-size: 15px; color: #a5c9ec; }
  .sel i { border: 3px solid transparent; border-top: 6px solid #c5dcf3; border-bottom: 0; margin-top: -4px; }
  .chat { margin: -7px 24px 0 12px; }
  .crumbs { height: 64px; padding: 4px 25px 0 0; display: flex; align-items: center; justify-content: flex-end; gap: 10.500px; font-size: 14px; font-weight: 300; color: #99abb4; }
  .crumbs a { color: #5a55ff; }
  .cols { display: flex; gap: 30px; padding: 0 24px 0 25px; }
  .main { width: 661px; flex: none; }
  .card { background: #fff; }
  .tasks { height: 474px; padding: 20px; }
  h2 { margin: 0; font-size: 22px; line-height: 26px; font-weight: 700; color: #455a64; }
  .tasks p { margin: 0 0 32px; font: italic 300 14px/23px "Open Sans", sans-serif; letter-spacing: -.165px; color: #1d1d1d; }
  .scroller { overflow: hidden; }
  .tr { width: 700px; height: 49px; display: grid; grid-template-columns: 234px 109px 105px 108px 144px; border-bottom: 1px solid #eceeef; font-size: 16px; font-weight: 300; line-height: 48px; color: #212529; }
  .tr span { padding-left: 12px; }
  .tr:last-child { border-bottom: 0; }
  .th { height: 50px; background: #00467f; color: #fff; font-weight: 400; line-height: 50px; border-bottom: 0; }
  .th span { padding-left: 13px; border-right: 1px solid #003f74; }
  .tr a.hov { color: #3740b8; }
  .tr b { display: inline-block; height: 19px; background: #00e69f; color: #fff; font-weight: 400; font-size: 12px; line-height: 19px; padding: 0 10px; border-radius: 3px; vertical-align: middle; margin-top: -1px; }
  .tr b.red { background: #ff2f43; }
  .act { display: flex; justify-content: flex-end; }
  button { height: 28px; width: 96px; padding: 0; border: 0; border-radius: 3px; background: #8400f6; color: #fff; font: 400 12px/28px "Open Sans", sans-serif; box-shadow: 0 1px 2px rgba(100, 0, 200, .4); }
  .tasks .act { margin-top: 15px; }
  .hbar { height: 15px; background: #f1f1f1; display: flex; align-items: center; }
  .hthumb { width: 555px; height: 11px; background: #c1c1c1; }
  .al { margin: 0 6px 0 5px; border: 4px solid transparent; border-right-color: #a3a3a3; border-left: 0; }
  .ar { margin-left: auto; margin-right: 5px; border: 4px solid transparent; border-left-color: #505050; border-right: 0; }
  .second { margin-top: 30px; padding: 20px 0 0; height: 200px; }
  .second h2 { padding-left: 18px; border-left: 2px solid #1c5a91; height: 100px; }
  .right { width: 316px; }
  .month { font-size: 18px; line-height: 28px; text-align: center; margin: 25px 0 34px; padding-right: 1px; color: #455a64; }
  .dow { width: 301px; height: 31px; background: #eff5f8; display: grid; grid-template-columns: repeat(7, 43px); font-size: 13px; font-weight: 300; line-height: 28px; text-align: center; color: #67757c; }
  .dow span { padding-right: 1px; }
  .cal { width: 316px; height: 200px; border: 1px solid #dee2e6; display: flex; background: #fff; }
  .weeks { flex: 1; overflow: hidden; }
  .week { position: relative; display: grid; grid-template-columns: 43px 42px 43px 43px 43px 43px 42px; height: 64px; }
  .week:first-child { height: 65px; }
  .day { border: solid #e7e9ec; border-width: 0 1px 1px 0; font-size: 16px; font-weight: 300; line-height: 22px; padding: 11px 0 0 15px; color: #212529; }
  .day:nth-child(7) { border-right: 0; }
  .day.sun { background: #ffb0b0; border-bottom-color: #f3dede; }
  .day.today { background: #e6e9ee; }
  .events { position: absolute; left: 0; right: 0; top: 45px; height: 19px; display: grid; grid-template-columns: 43px 42px 43px 43px 43px 43px 42px; }
  .week:nth-child(3) .events { height: 18px; }
  .ev { background: #4570ff; margin-left: -1px; color: #fff; font-size: 13px; line-height: 27px; padding: 0 4px 0 5px; overflow: hidden; }
  .ev > span { display: block; overflow: hidden; height: 19px; white-space: nowrap; letter-spacing: -.07px; }
  .vbar { width: 15px; flex: none; background: #f1f1f1; display: flex; flex-direction: column; align-items: center; padding: 6px 0; }
  .up { border: 4px solid transparent; border-bottom-color: #a3a3a3; border-top: 0; }
  .down { margin-top: auto; border: 4px solid transparent; border-top-color: #505050; border-bottom: 0; }
  .thumb { width: 11px; height: 87px; margin-top: 5px; background: #c1c1c1; }
  .pagebar .thumb { height: 419px; }
  .right .act { margin: 24px 1px 0 0; }
  h3 { margin: 0; height: 41px; width: 315px; border-bottom: 1px solid #d6d8dc; font-size: 22px; line-height: 27px; font-weight: 400; color: #bbbdc0; }
  .right .act + h3 { margin-bottom: 16px; }
  .line { display: flex; justify-content: space-between; width: 315px; height: 24px; font-size: 16px; font-weight: 300; line-height: 24px; color: #212529; }
  h3.tm { margin-top: 16px; }
</style>
